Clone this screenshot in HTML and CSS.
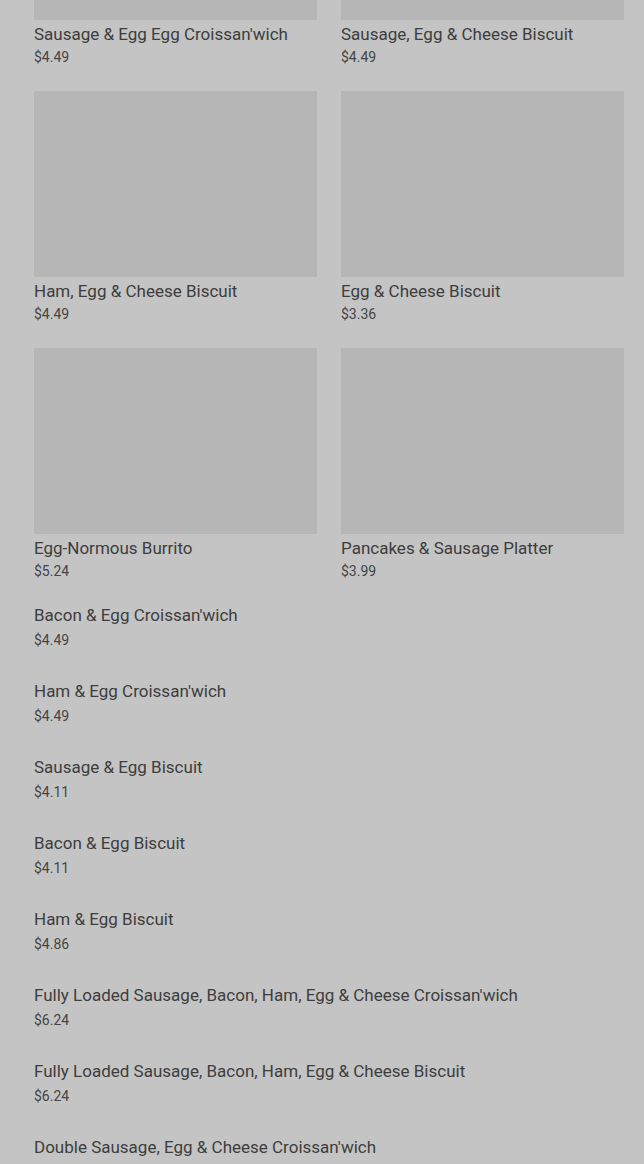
FILE: index.html
```html
<!DOCTYPE html>
<html lang="en">
<head>
  <meta charset="UTF-8" />
  <meta name="viewport" content="width=device-width, initial-scale=1.0"/>
  <title>Breakfast Menu</title>
  <link rel="stylesheet" href="styles.css">
</head>
<body>
  <div class="menu">
    <div class="grid">
      <div class="card">
        <div class="thumb"></div>
        <div class="name">Sausage &amp; Egg Egg Croissan'wich</div>
        <div class="price">$4.49</div>
      </div>
      <div class="card">
        <div class="thumb"></div>
        <div class="name">Sausage, Egg &amp; Cheese Biscuit</div>
        <div class="price">$4.49</div>
      </div>
      <div class="card">
        <div class="thumb"></div>
        <div class="name">Ham, Egg &amp; Cheese Biscuit</div>
        <div class="price">$4.49</div>
      </div>
      <div class="card">
        <div class="thumb"></div>
        <div class="name">Egg &amp; Cheese Biscuit</div>
        <div class="price">$3.36</div>
      </div>
      <div class="card">
        <div class="thumb"></div>
        <div class="name">Egg-Normous Burrito</div>
        <div class="price">$5.24</div>
      </div>
      <div class="card">
        <div class="thumb"></div>
        <div class="name">Pancakes &amp; Sausage Platter</div>
        <div class="price">$3.99</div>
      </div>
    </div>

    <div class="list">
      <div class="item">
        <div class="name">Bacon &amp; Egg Croissan'wich</div>
        <div class="price">$4.49</div>
      </div>
      <div class="item">
        <div class="name">Ham &amp; Egg Croissan'wich</div>
        <div class="price">$4.49</div>
      </div>
      <div class="item">
        <div class="name">Sausage &amp; Egg Biscuit</div>
        <div class="price">$4.11</div>
      </div>
      <div class="item">
        <div class="name">Bacon &amp; Egg Biscuit</div>
        <div class="price">$4.11</div>
      </div>
      <div class="item">
        <div class="name">Ham &amp; Egg Biscuit</div>
        <div class="price">$4.86</div>
      </div>
      <div class="item">
        <div class="name">Fully Loaded Sausage, Bacon, Ham, Egg &amp; Cheese Croissan'wich</div>
        <div class="price">$6.24</div>
      </div>
      <div class="item">
        <div class="name">Fully Loaded Sausage, Bacon, Ham, Egg &amp; Cheese Biscuit</div>
        <div class="price">$6.24</div>
      </div>
      <div class="item">
        <div class="name">Double Sausage, Egg &amp; Cheese Croissan'wich</div>
      </div>
    </div>
  </div>
</body>
</html>
```

FILE: styles.css
```css
* {
  margin: 0; padding: 0; box-sizing: border-box;
}

html, body {
  width: 100%;
  height: 100%;
  overflow: hidden;
  background: #c4c4c4;
  font-family: Roboto, 'Noto Sans', sans-serif;
  color: #3d3d3d;
}

/* page is scrolled: first row is mostly above the fold */
.menu {
  margin-top: -166px;
  padding: 0 20px 0 34px;
}

.grid {
  display: grid;
  grid-template-columns: 1fr 1fr;
  column-gap: 24px;
  row-gap: 24px;
}

.thumb {
  height: 186px;
  background: #b6b6b6;
  margin-bottom: 4px;
}

.name {
  font-size: 17px;
  line-height: 20px;
  font-weight: 400;
}

.price {
  font-size: 14px;
  line-height: 20px;
  margin-top: 3px;
  color: #454545;
}

.list {
  margin-top: 24px;
  display: flex;
  flex-direction: column;
  gap: 31px;
}

.list .price {
  margin-top: 5px;
}
```
